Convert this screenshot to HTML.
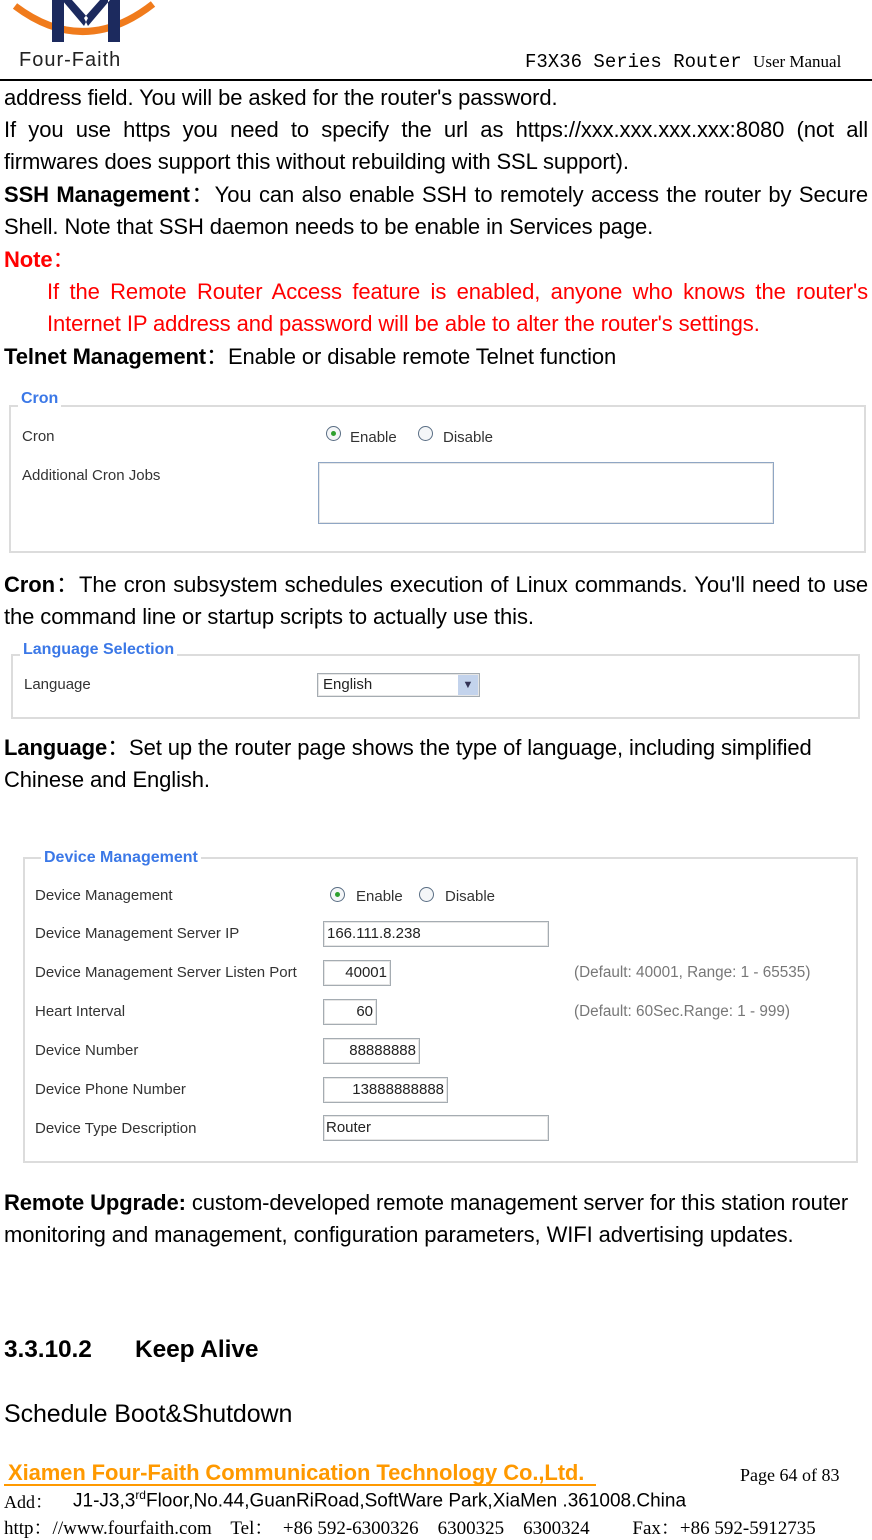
<!DOCTYPE html>
<html><head><meta charset="utf-8"><style>
*{margin:0;padding:0;box-sizing:border-box}
body{width:872px;height:1534px;position:relative;background:#fff;font-family:"Liberation Sans","Noto Sans CJK SC",sans-serif;color:#000;overflow:hidden}
.l{position:absolute;left:4px;font-size:22px;line-height:24px;white-space:nowrap;letter-spacing:-0.1px}
.j{width:864px;text-align:justify;text-align-last:justify;white-space:normal}
.r{color:#f00}
.fs{position:absolute;border:2px solid #dcdcdc}
.lg{position:absolute;background:#fff;color:#3b78e7;font-size:16px;font-weight:bold;padding:0 3px;line-height:18px}
.u{position:absolute;font-size:15px;color:#333;line-height:18px;white-space:nowrap}
.in{position:absolute;border:1px solid #a5acb2;box-shadow:inset 0 0 0 1px #e6e6e6;font-size:15px;line-height:24px;color:#222;padding:0 3px;white-space:nowrap}
.rad{position:absolute;width:15px;height:15px;border:1px solid #5a6e84;border-radius:50%;background:#f4f6f8}
.rad.on::after{content:"";position:absolute;left:4px;top:4px;width:5px;height:5px;border-radius:50%;background:#2ea02e}
.hint{position:absolute;font-size:15.3px;color:#777;line-height:18px;white-space:nowrap}
.sf{font-family:"Liberation Serif","Noto Serif CJK SC",serif}
</style></head><body>
<svg style="position:absolute;left:0;top:0" width="172" height="72">
<path d="M15 6 Q84 58 153 4" stroke="#f07b1c" stroke-width="7" fill="none"/>
<path d="M52 0 H64 V42 H52 Z M108 0 H120 V42 H108 Z M62 0 H72 L88 18 L84 26 Z M110 0 H100 L84 18 L88 26 Z" fill="#1c2a5e"/>
<text x="19" y="66" font-family="Liberation Sans" font-size="20" fill="#222" letter-spacing="1">Four-Faith</text>
</svg>
<div style="position:absolute;left:525px;top:51px;font-family:'Liberation Mono',monospace;font-size:19px;white-space:nowrap">F3X36 Series Router <span class="sf" style="font-size:17px">User Manual</span></div>
<div style="position:absolute;left:0;top:79px;width:872px;height:2px;background:#000"></div>

<div class="l" style="top:86px">address field. You will be asked for the router's password.</div>
<div class="l j" style="top:118px">If you use https you need to specify the url as https://xxx.xxx.xxx.xxx:8080 (not all</div>
<div class="l" style="top:150px">firmwares does support this without rebuilding with SSL support).</div>
<div class="l j" style="top:183px"><b>SSH Management</b>：You can also enable SSH to remotely access the router by Secure</div>
<div class="l" style="top:215px">Shell. Note that SSH daemon needs to be enable in Services page.</div>
<div class="l r" style="top:248px"><b>Note</b>：</div>
<div class="l r j" style="top:280px;left:47px;width:821px">If the Remote Router Access feature is enabled, anyone who knows the router's</div>
<div class="l r" style="top:312px;left:47px">Internet IP address and password will be able to alter the router's settings.</div>
<div class="l" style="top:345px"><b>Telnet Management</b>：Enable or disable remote Telnet function</div>

<div class="fs" style="left:9px;top:405px;width:857px;height:148px"></div>
<div class="lg" style="left:18px;top:390px">Cron</div>
<div class="u" style="left:22px;top:428px">Cron</div>
<div class="rad on" style="left:326px;top:426px"></div><div class="u" style="left:350px;top:429px">Enable</div>
<div class="rad" style="left:418px;top:426px"></div><div class="u" style="left:443px;top:429px">Disable</div>
<div class="u" style="left:22px;top:467px">Additional Cron Jobs</div>
<div class="in" style="left:318px;top:462px;width:456px;height:62px;border-color:#8fa6c4"></div>

<div class="l j" style="top:573px"><b>Cron</b>：The cron subsystem schedules execution of Linux commands. You'll need to use</div>
<div class="l" style="top:605px">the command line or startup scripts to actually use this.</div>

<div class="fs" style="left:11px;top:654px;width:849px;height:65px"></div>
<div class="lg" style="left:20px;top:641px">Language Selection</div>
<div class="u" style="left:24px;top:676px">Language</div>
<div class="in" style="left:317px;top:673px;width:163px;height:24px;padding-left:5px;line-height:22px">English<span style="position:absolute;right:1px;top:1px;width:20px;height:20px;background:#c3d3ec;color:#335;font-size:11px;text-align:center;line-height:20px">▼</span></div>

<div class="l" style="top:736px"><b>Language</b>：Set up the router page shows the type of language, including simplified</div>
<div class="l" style="top:768px">Chinese and English.</div>

<div class="fs" style="left:23px;top:857px;width:835px;height:306px"></div>
<div class="lg" style="left:41px;top:849px">Device Management</div>
<div class="u" style="left:35px;top:887px">Device Management</div>
<div class="rad on" style="left:330px;top:887px"></div><div class="u" style="left:356px;top:888px">Enable</div>
<div class="rad" style="left:419px;top:887px"></div><div class="u" style="left:445px;top:888px">Disable</div>
<div class="u" style="left:35px;top:925px">Device Management Server IP</div>
<div class="in" style="left:323px;top:921px;width:226px;height:26px">166.111.8.238</div>
<div class="u" style="left:35px;top:964px">Device Management Server Listen Port</div>
<div class="in" style="left:323px;top:960px;width:68px;height:26px;text-align:right">40001</div>
<div class="hint" style="left:574px;top:964px">(Default: 40001, Range: 1 - 65535)</div>
<div class="u" style="left:35px;top:1003px">Heart Interval</div>
<div class="in" style="left:323px;top:999px;width:54px;height:26px;text-align:right">60</div>
<div class="hint" style="left:574px;top:1003px">(Default: 60Sec.Range: 1 - 999)</div>
<div class="u" style="left:35px;top:1042px">Device Number</div>
<div class="in" style="left:323px;top:1038px;width:97px;height:26px;text-align:right">88888888</div>
<div class="u" style="left:35px;top:1081px">Device Phone Number</div>
<div class="in" style="left:323px;top:1077px;width:125px;height:26px;text-align:right">13888888888</div>
<div class="u" style="left:35px;top:1120px">Device Type Description</div>
<div class="in" style="left:323px;top:1115px;width:226px;height:26px;padding-left:2px">Router</div>

<div class="l" style="top:1191px"><b>Remote Upgrade:</b> custom-developed remote management server for this station router</div>
<div class="l" style="top:1223px">monitoring and management, configuration parameters, WIFI advertising updates.</div>

<div class="l" style="top:1336px;font-size:24.5px;font-weight:bold;line-height:28px">3.3.10.2<span style="position:absolute;left:131px">Keep Alive</span></div>
<div class="l" style="top:1400px;font-size:25px;line-height:28px">Schedule Boot&amp;Shutdown</div>

<div class="l" style="top:1462px;font-size:22px;font-weight:bold;color:#f90;border-bottom:2px solid #f90;line-height:22px;padding-right:12px;padding-left:4px;left:4px">Xiamen Four-Faith Communication Technology Co.,Ltd.</div>
<div class="sf" style="position:absolute;left:740px;top:1465px;font-size:18px;white-space:nowrap">Page 64 of 83</div>
<div style="position:absolute;left:4px;top:1488px;font-size:19px;white-space:nowrap"><span class="sf" style="font-size:18px">Add：</span><span style="position:absolute;left:69px">J1-J3,3<sup style="font-size:12px">rd</sup>Floor,No.44,GuanRiRoad,SoftWare Park,XiaMen .361008.China</span></div>
<div class="sf" style="position:absolute;left:4px;top:1513px;font-size:19px;white-space:pre">http：//www.fourfaith.com    Tel：  +86 592-6300326    6300325    6300324         Fax：+86 592-5912735</div>
</body></html>
